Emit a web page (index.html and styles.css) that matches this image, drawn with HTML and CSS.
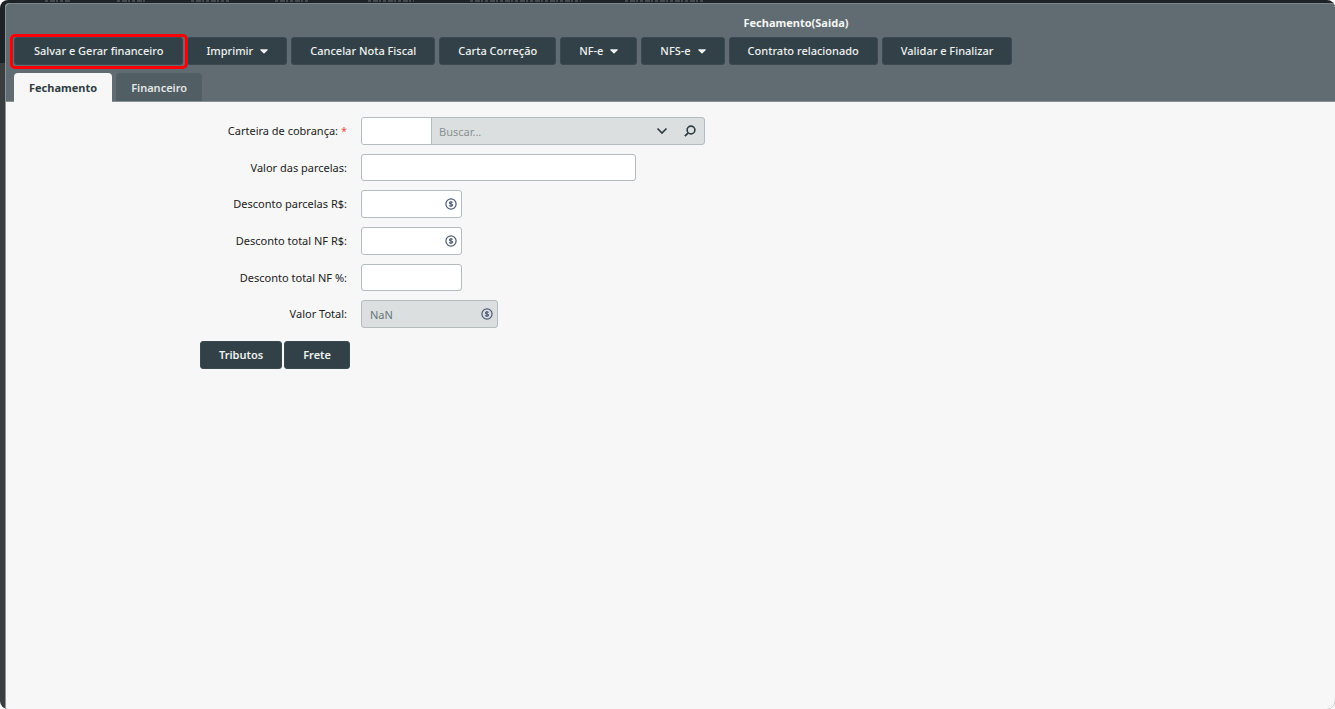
FILE: index.html
```html
<!DOCTYPE html>
<html lang="pt-BR">
<head>
<meta charset="utf-8">
<title>Fechamento(Saida)</title>
<link rel="stylesheet" href="styles.css">
</head>
<body>
<svg class="sprite" aria-hidden="true">
  <symbol id="money" viewBox="0 0 12 12">
    <circle cx="6" cy="6" r="5.100" fill="none" stroke="currentColor" stroke-width="1.200"/>
    <path d="M7.600 4.500C7.200 4 6.700 3.800 6 3.800c-.9 0-1.600.4-1.600 1.100C4.400 6.300 7.700 5.600 7.700 7.100c0 .7-.7 1.100-1.700 1.100-.8 0-1.400-.2-1.800-.8M6 2.900v6.200" fill="none" stroke="currentColor" stroke-width="1.100"/>
  </symbol>
  <symbol id="caret" viewBox="0 0 8 5"><path d="M.8.300h6.400c.6 0 .8.500.4.900L4.500 4.300c-.3.300-.7.300-1 0L.4 1.200C0 .8.200.3.800.3z" fill="currentColor"/></symbol>
</svg>
<div class="app">
  <svg class="backdrop" aria-hidden="true"><path d="M40 1h25M112 1h30M186 1h38M270 1h33M363 1h46M465 1h111M620 1h79" stroke="#6b7073" stroke-width="1" stroke-dasharray="3 2 5 1 2 2"/></svg>
  <main class="dialog">
    <header class="head">
      <h1 class="title">Fechamento(Saida)</h1>
      <div class="toolbar">
        <div class="marked"><button class="btn btn-main" type="button">Salvar e Gerar financeiro</button></div>
        <button class="btn" type="button">Imprimir <svg class="caret"><use href="#caret"/></svg></button>
        <button class="btn" type="button">Cancelar Nota Fiscal</button>
        <button class="btn" type="button">Carta Correção</button>
        <button class="btn" type="button">NF-e <svg class="caret"><use href="#caret"/></svg></button>
        <button class="btn" type="button">NFS-e <svg class="caret"><use href="#caret"/></svg></button>
        <button class="btn" type="button">Contrato relacionado</button>
        <button class="btn" type="button">Validar e Finalizar</button>
      </div>
      <div class="tabs" role="tablist">
        <button class="tab tab-active" type="button" role="tab" aria-selected="true">Fechamento</button>
        <button class="tab" type="button" role="tab" aria-selected="false">Financeiro</button>
      </div>
    </header>
    <form class="form">
      <div class="row">
        <label class="label" for="carteira">Carteira de cobrança: <span class="req">*</span></label>
        <div class="field field-lookup">
          <input class="input code" id="carteira" type="text">
          <input class="input search" type="text" placeholder="Buscar..." aria-label="Buscar carteira">
          <button class="icon-btn" type="button" aria-label="Abrir lista"><svg class="chevron" viewBox="0 0 12 8"><path d="M1.500 1.500 6 6l4.500-4.500" fill="none" stroke="currentColor" stroke-width="1.700"/></svg></button>
          <button class="icon-btn" type="button" aria-label="Pesquisar"><svg class="lens" viewBox="0 0 12 12"><circle cx="7" cy="5" r="3.900" fill="none" stroke="currentColor" stroke-width="1.600"/><path d="M4.200 7.800.9 11.100" stroke="currentColor" stroke-width="1.900"/></svg></button>
        </div>
      </div>
      <div class="row">
        <label class="label" for="parcelas">Valor das parcelas:</label>
        <div class="field field-plain field-wide"><input class="input" id="parcelas" type="text"></div>
      </div>
      <div class="row">
        <label class="label" for="descparc">Desconto parcelas R$:</label>
        <div class="field field-small"><input class="input" id="descparc" type="text"><svg class="money"><use href="#money"/></svg></div>
      </div>
      <div class="row">
        <label class="label" for="descnf">Desconto total NF R$:</label>
        <div class="field field-small"><input class="input" id="descnf" type="text"><svg class="money"><use href="#money"/></svg></div>
      </div>
      <div class="row">
        <label class="label" for="descpct">Desconto total NF %:</label>
        <div class="field field-plain field-small"><input class="input" id="descpct" type="text"></div>
      </div>
      <div class="row">
        <label class="label" for="total">Valor Total:</label>
        <div class="field field-total"><input class="input" id="total" type="text" value="NaN" readonly><svg class="money"><use href="#money"/></svg></div>
      </div>
      <div class="actions">
        <button class="btn btn-strong" type="button">Tributos</button>
        <button class="btn btn-strong" type="button">Frete</button>
      </div>
    </form>
  </main>
</div>
</body>
</html>
```
FILE: styles.css
```css
* { box-sizing: border-box; }

body {
  margin: 0;
  background: #fff;
  color: #222;
  font: 11px/16px "Noto Sans", sans-serif;
}

button, input { font: inherit; }

.sprite { display: none; }

.app {
  display: flex;
  flex-direction: column;
  min-height: 100vh;
  padding-left: 5px;
  border-radius: 8px;
  overflow: hidden;
  background: linear-gradient(#1c2226 0 63px, #3a3e3f 63px);
}

.backdrop {
  display: block;
  width: 100%;
  height: 3px;
}

.dialog {
  flex: 1;
  border-top: 1px solid #7b868b;
  border-left: 1px solid #8b9598;
  border-top-left-radius: 4px;
  background: #f7f7f7;
  overflow: hidden;
}

.head {
  padding: 11px 8px 0;
  border-bottom: 1px solid #869194;
  background: #606c72;
}

.title {
  margin: 0 0 6px;
  padding-left: 251px;
  color: #f4f5f5;
  font-size: 11px;
  font-weight: 700;
  line-height: 16px;
  text-align: center;
}

.toolbar {
  display: flex;
  flex-wrap: wrap;
  gap: 4px;
}

.marked { position: relative; }

.marked::after {
  content: "";
  position: absolute;
  inset: -3px -5px -4px -4px;
  border: 3px solid #f00;
  border-radius: 5px;
  pointer-events: none;
}

.btn {
  display: inline-flex;
  align-items: center;
  gap: 7px;
  height: 28px;
  padding: 0 18px;
  border: 1px solid #3a4a50;
  border-radius: 3px;
  background: #314147;
  color: #f0f1f1;
  font-weight: 500;
  white-space: nowrap;
}

.btn-main { padding: 0 19px; }
.btn-strong { font-weight: 600; }

.caret { width: 8px; height: 5px; }

.tabs {
  display: flex;
  gap: 4px;
  padding-top: 8px;
}

.tab {
  height: 28px;
  padding: 2px 15px 0;
  border: 0;
  border-radius: 4px 4px 0 0;
  background: #515e64;
  color: #e3e6e7;
  font-weight: 600;
}

.tab-active {
  height: 29px;
  margin-bottom: -1px;
  padding-top: 0;
  background: #f7f7f7;
  color: #2f3e44;
  font-weight: 700;
}

.form {
  display: flex;
  flex-direction: column;
  gap: 9px;
  padding: 15px 8px 15px 0;
}

.row {
  display: grid;
  grid-template-columns: 341px minmax(0, 1fr);
  column-gap: 14px;
  align-items: center;
}

.label { text-align: right; }
.req { color: #e8503a; }

.field {
  display: flex;
  align-items: center;
  height: 28px;
  max-width: 100%;
  border: 1px solid #b3bcbf;
  border-radius: 3px;
  background: #fff;
  overflow: hidden;
}

.field-plain { height: 27px; }
.field-lookup { width: 344px; background: #dbdfe0; }
.field-wide { width: 275px; }
.field-small { width: 101px; }
.field-total { width: 137px; background: #dbdfe0; }

.input {
  flex: 1;
  min-width: 0;
  height: 100%;
  padding: 0 8px;
  border: 0;
  outline: 0;
  background: transparent;
  color: #687478;
}

.code {
  flex: none;
  width: 70px;
  border-right: 1px solid #b3bcbf;
  background: #fff;
}

.search { padding: 0 7px; }
.search::placeholder { color: #8b9193; }

.icon-btn {
  display: flex;
  align-items: center;
  justify-content: center;
  width: 28px;
  height: 100%;
  padding: 0;
  border: 0;
  background: transparent;
  color: #2f3e44;
}

.chevron { width: 12px; height: 8px; }
.lens { width: 12px; height: 12px; }

.money {
  flex: none;
  width: 12px;
  height: 12px;
  margin-right: 4px;
  color: #4d5978;
}

.actions {
  display: flex;
  gap: 2px;
  padding: 4px 0 0 194px;
}
```
